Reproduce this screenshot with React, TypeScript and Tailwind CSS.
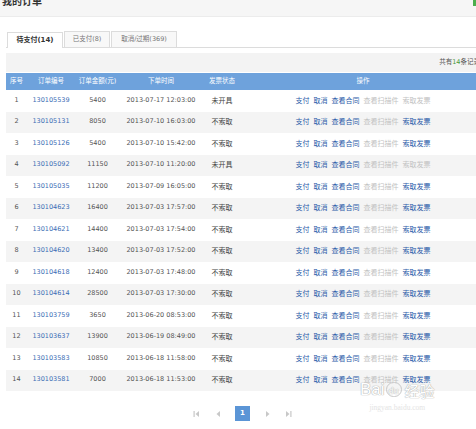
import React from "react";

type Row = {
  no: string;
  amount: string;
  time: string;
  invoice: string;
};

const rows: Row[] = [
  { no: "130105539", amount: "5400", time: "2013-07-17 12:03:00", invoice: "未开具" },
  { no: "130105131", amount: "8050", time: "2013-07-10 16:03:00", invoice: "不索取" },
  { no: "130105126", amount: "5400", time: "2013-07-10 15:42:00", invoice: "不索取" },
  { no: "130105092", amount: "11150", time: "2013-07-10 11:20:00", invoice: "未开具" },
  { no: "130105035", amount: "11200", time: "2013-07-09 16:05:00", invoice: "不索取" },
  { no: "130104623", amount: "16400", time: "2013-07-03 17:57:00", invoice: "不索取" },
  { no: "130104621", amount: "14400", time: "2013-07-03 17:54:00", invoice: "不索取" },
  { no: "130104620", amount: "13400", time: "2013-07-03 17:52:00", invoice: "不索取" },
  { no: "130104618", amount: "12400", time: "2013-07-03 17:48:00", invoice: "不索取" },
  { no: "130104614", amount: "28500", time: "2013-07-03 17:30:00", invoice: "不索取" },
  { no: "130103759", amount: "3650", time: "2013-06-20 08:53:00", invoice: "不索取" },
  { no: "130103637", amount: "13900", time: "2013-06-19 08:49:00", invoice: "不索取" },
  { no: "130103583", amount: "10850", time: "2013-06-18 11:58:00", invoice: "不索取" },
  { no: "130103581", amount: "7000", time: "2013-06-18 11:53:00", invoice: "不索取" },
];

const font = "font-['DejaVu_Sans','Noto_Sans_CJK_SC',sans-serif]";
const cols = "grid grid-cols-[21px_48px_45px_82px_40px_1fr]";

function Arrow({ dir, bar }: { dir: "l" | "r"; bar?: boolean }) {
  return (
    <svg width="7" height="8" viewBox="0 0 7 8" className="text-[#c8c8c8]">
      {dir === "l" ? (
        <>
          {bar && <rect x="0.5" y="1" width="1.2" height="6" fill="currentColor" />}
          <path d="M6 1 L2.5 4 L6 7 Z" fill="currentColor" />
        </>
      ) : (
        <>
          <path d="M1 1 L4.5 4 L1 7 Z" fill="currentColor" />
          {bar && <rect x="5.3" y="1" width="1.2" height="6" fill="currentColor" />}
        </>
      )}
    </svg>
  );
}

export default function App() {
  return (
    <div className={`relative w-[476px] h-[429px] overflow-hidden bg-white ${font}`}>
      <div className="w-[484px]">
        {/* page title bar */}
        <div className="h-[17px] bg-[#f6f6f6] border-b border-[#ececec] flex justify-between overflow-hidden">
          <div className="-mt-[6px] pl-[2px] text-[10px] font-bold text-[#333]">我的订单</div>
          <div className="w-[6px] h-[6px] bg-[#4cae4c] mr-[5px]" />
        </div>

        <div className="pt-[15px] pl-[6px]">
          {/* tabs */}
          <div className="flex gap-[1px] pl-[1px] border-b border-[#dcdcdc] h-[16px] items-end">
            <div className="w-[56px] h-[16px] -mb-[1px] bg-white border border-b-0 border-[#dcdcdc] flex items-center justify-center text-[7px] font-bold text-[#333]">
              待支付(14)
            </div>
            <div className="w-[46px] h-[16px] bg-[#f8f8f8] border border-b-0 border-[#dcdcdc] flex items-center justify-center text-[6.5px] text-[#777]">
              已支付(8)
            </div>
            <div className="w-[66px] h-[16px] bg-[#f8f8f8] border border-b-0 border-[#dcdcdc] flex items-center justify-center text-[6.5px] text-[#777]">
              取消/过期(369)
            </div>
          </div>

          {/* summary */}
          <div className="mt-[5px] h-[19px] bg-[#f3f3f3] flex items-center justify-end pr-[4px] text-[6.5px] text-[#555]">
            共有<span className="text-[#4a9a3a]">14</span>条记录
          </div>

          {/* table */}
          <div className={`${cols} mt-[1px] h-[17px] bg-[#6ea2dc] text-white text-[6.5px] items-center`}>
            <div className="text-center">序号</div>
            <div className="text-center">订单编号</div>
            <div className="text-center">订单金额(元)</div>
            <div className="text-center">下单时间</div>
            <div className="text-center">发票状态</div>
            <div className="text-center">操作</div>
          </div>

          {rows.map((r, i) => {
            const canAsk = r.invoice !== "未开具";
            return (
              <div
                key={r.no}
                className={`${cols} h-[21.5px] items-center text-[6.5px] text-[#555] ${i % 2 ? "bg-[#f4f4f4]" : "bg-white"}`}
              >
                <div className="text-center">{i + 1}</div>
                <div className="text-center text-[#3a6db5]">{r.no}</div>
                <div className="text-center">{r.amount}</div>
                <div className="text-center">{r.time}</div>
                <div className="text-center text-[7px] text-[#444]">{r.invoice}</div>
                <div className="flex justify-center gap-[4px] text-[7px]">
                  <span className="text-[#2a5aa8]">支付</span>
                  <span className="text-[#2a5aa8]">取消</span>
                  <span className="text-[#2a5aa8]">查看合同</span>
                  <span className="text-[#c2c2c2]">查看扫描件</span>
                  <span className={canAsk ? "text-[#2a5aa8]" : "text-[#c2c2c2]"}>索取发票</span>
                </div>
              </div>
            );
          })}

          {/* pagination */}
          <div className="flex items-center pl-[187px] pt-[15px] text-[7px]">
            <Arrow dir="l" bar />
            <div className="ml-[14px]">
              <Arrow dir="l" />
            </div>
            <div className="ml-[14px] w-[15px] h-[15px] bg-[#5b95d6] text-white font-bold flex items-center justify-center">
              1
            </div>
            <div className="ml-[15px]">
              <Arrow dir="r" />
            </div>
            <div className="ml-[13px]">
              <Arrow dir="r" bar />
            </div>
          </div>
        </div>
      </div>

      {/* baidu watermark */}
      <div className="absolute left-[360px] top-[381px] flex flex-col items-center text-white [text-shadow:0_0_1px_#a8a8a8,0_0_1px_#a8a8a8] pointer-events-none">
        <div className="flex items-end text-[17px] leading-none font-['Liberation_Sans',sans-serif]">
          <span>Bai</span>
          <span className="ml-[1px] mb-[1px] w-[16px] h-[15px] rounded-full border border-[#c8c8c8] flex items-end justify-center text-[9px]">du</span>
          <span className="ml-[3px] text-[15px] font-['Noto_Sans_CJK_SC',sans-serif]">经验</span>
        </div>
        <div className="mt-[4px] text-[7.5px] text-[#e4e4e4] [text-shadow:none] font-['Liberation_Serif',serif]">jingyan.baidu.com</div>
      </div>
    </div>
  );
}
